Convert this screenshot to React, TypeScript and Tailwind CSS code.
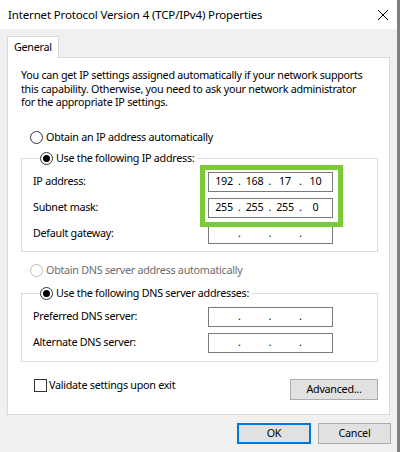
import { Fragment } from "react";

const font = "font-['Noto_Sans',sans-serif] text-[10.75px] tracking-[-0.27px]";

function Radio({ checked, disabled }: { checked?: boolean; disabled?: boolean }) {
  return (
    <span
      className={
        "w-[13px] h-[13px] rounded-full border bg-white flex items-center justify-center shrink-0 " +
        (disabled ? "border-[#bcbcbc]" : "border-[#333333]")
      }
    >
      {checked && <span className="w-[7px] h-[7px] rounded-full bg-black" />}
    </span>
  );
}

function IpField({ parts }: { parts?: string[] }) {
  const p = parts ?? ["", "", "", ""];
  return (
    <div className="w-[125px] h-[20px] border border-[#7a7a7a] bg-white flex items-center pl-[2px]">
      {p.map((v, i) => (
        <Fragment key={i}>
          <span className="w-[26px] text-center">{v}</span>
          {i < 3 && <span className="w-[4.5px] text-center">.</span>}
        </Fragment>
      ))}
    </div>
  );
}

function FieldRow({ label, parts }: { label: string; parts?: string[] }) {
  return (
    <div className="flex items-center">
      <span className="w-[175px]">{label}</span>
      <IpField parts={parts} />
    </div>
  );
}

function GroupBox({
  legend,
  children,
  className,
}: {
  legend: string;
  children: React.ReactNode;
  className: string;
}) {
  return (
    <div className={"relative w-[357px] border border-[#dcdcdc] pl-[11px] " + className}>
      <div className="-mt-[7px] ml-[7px] flex items-center gap-[3px] bg-white w-fit pr-[3px] h-[13px]">
        <Radio checked />
        <span>{legend}</span>
      </div>
      {children}
    </div>
  );
}

export default function App() {
  return (
    <div className={"w-[400px] h-[452px] bg-[#f0f0f0] border-r-[3px] border-[#808080] text-black flex flex-col whitespace-nowrap " + font}>
      <div className="h-[29px] bg-white flex items-center justify-between pl-[8px] pr-[9px] shrink-0">
        <span className="text-[11.5px] tracking-[-0.15px]">Internet Protocol Version 4 (TCP/IPv4) Properties</span>
        <svg width="10" height="10" viewBox="0 0 10 10">
          <path d="M0 0L10 10M10 0L0 10" stroke="#000" strokeWidth="1" />
        </svg>
      </div>

      <div className="pl-[7px] pt-[7px] flex flex-col">
        <div className="relative z-10 -mb-px h-[22px] w-[52px] bg-white border-x border-t border-[#d9d9d9] flex items-center pl-[6px]">
          General
        </div>
        <div className="w-[383px] h-[358px] bg-white border border-[#d9d9d9] pl-[13px] pt-[11px]">
          <p className="leading-[13.5px]">
            You can get IP settings assigned automatically if your network supports
            <br />
            this capability. Otherwise, you need to ask your network administrator
            <br />
            for the appropriate IP settings.
          </p>

          <div className="mt-[21px] ml-[9px] flex items-center gap-[3px] h-[13px]">
            <Radio />
            <span>Obtain an IP address automatically</span>
          </div>

          <GroupBox legend="Use the following IP address:" className="mt-[14px] pb-[7px]">
            <div className="mt-[7px] flex flex-col gap-[6px]">
              <FieldRow label="IP address:" parts={["192", "168", "17", "10"]} />
              <FieldRow label="Subnet mask:" parts={["255", "255", "255", "0"]} />
              <FieldRow label="Default gateway:" />
            </div>
            <div className="absolute left-[178px] top-[6px] w-[143px] h-[62px] border-[5px] border-[#7cc93a]" />
          </GroupBox>

          <div className="mt-[12px] ml-[9px] flex items-center gap-[3px] h-[13px] text-[#6d6d6d]">
            <Radio disabled />
            <span>Obtain DNS server address automatically</span>
          </div>

          <GroupBox legend="Use the following DNS server addresses:" className="mt-[16px] pb-[8px]">
            <div className="mt-[7px] flex flex-col gap-[6px]">
              <FieldRow label="Preferred DNS server:" />
              <FieldRow label="Alternate DNS server:" />
            </div>
          </GroupBox>

          <div className="mt-[17px] w-[357px] flex items-start justify-between">
            <div className="ml-[13px] flex items-center gap-[2px] h-[13px] mt-0">
              <span className="w-[13px] h-[13px] border border-[#333333] bg-white" />
              <span>Validate settings upon exit</span>
            </div>
            <button className="w-[88px] h-[21px] bg-[#e1e1e1] border border-[#adadad] flex items-center justify-center">
              Advanced...
            </button>
          </div>
        </div>

        <div className="mt-[8px] w-[384px] flex justify-end gap-[7px]">
          <button className="w-[74px] h-[21px] bg-[#e1e1e1] border-2 border-[#0078d7] flex items-center justify-center">
            OK
          </button>
          <button className="w-[73px] h-[21px] bg-[#e1e1e1] border border-[#adadad] flex items-center justify-center">
            Cancel
          </button>
        </div>
      </div>
    </div>
  );
}
